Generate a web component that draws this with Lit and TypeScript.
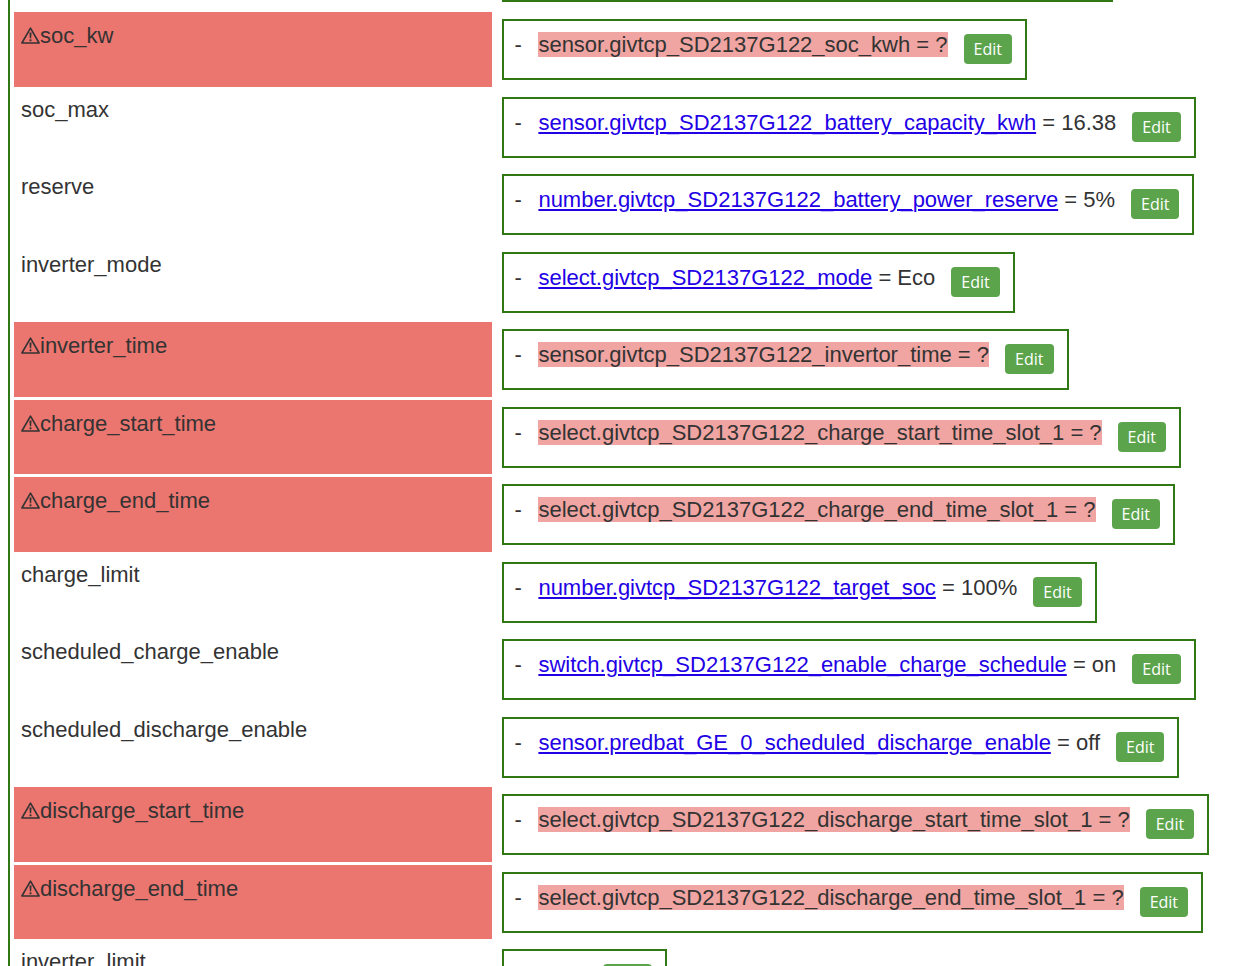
import { LitElement, html, css, svg, nothing } from "lit";
import { customElement, property } from "lit/decorators.js";

interface Setting {
  name: string;
  entity?: string;
  value: string;
  missing?: boolean;
}

const P = "givtcp_SD2137G122_";

const SETTINGS: Setting[] = [
  { name: "soc_kw", entity: `sensor.${P}soc_kwh`, value: "?", missing: true },
  { name: "soc_max", entity: `sensor.${P}battery_capacity_kwh`, value: "16.38" },
  { name: "reserve", entity: `number.${P}battery_power_reserve`, value: "5%" },
  { name: "inverter_mode", entity: `select.${P}mode`, value: "Eco" },
  { name: "inverter_time", entity: `sensor.${P}invertor_time`, value: "?", missing: true },
  { name: "charge_start_time", entity: `select.${P}charge_start_time_slot_1`, value: "?", missing: true },
  { name: "charge_end_time", entity: `select.${P}charge_end_time_slot_1`, value: "?", missing: true },
  { name: "charge_limit", entity: `number.${P}target_soc`, value: "100%" },
  { name: "scheduled_charge_enable", entity: `switch.${P}enable_charge_schedule`, value: "on" },
  { name: "scheduled_discharge_enable", entity: "sensor.predbat_GE_0_scheduled_discharge_enable", value: "off" },
  { name: "discharge_start_time", entity: `select.${P}discharge_start_time_slot_1`, value: "?", missing: true },
  { name: "discharge_end_time", entity: `select.${P}discharge_end_time_slot_1`, value: "?", missing: true },
  { name: "inverter_limit", value: "3600" },
];

const warningShape = svg`
  <path d="M9.5 1.2 L18.1 16 H0.9 Z" fill="none" stroke="currentColor" stroke-width="1.6" stroke-linejoin="round"/>
  <path d="M8.5 5.6 H10.5 L10.2 11.2 H8.8 Z" fill="currentColor"/>
  <circle cx="9.5" cy="13.3" r="1.1" fill="currentColor"/>`;

@customElement("setting-value")
class SettingValue extends LitElement {
  @property({ attribute: false }) setting!: Setting;

  static styles = css`
    :host {
      display: block;
    }
    .box {
      display: inline-flex;
      vertical-align: top;
      align-items: flex-start;
      padding: 11px 13px 14px 10px;
      border: 2px solid #307814;
      line-height: 25px;
      white-space: nowrap;
    }
    .dash {
      width: 24px;
    }
    .missing {
      background: #f0a5a2;
    }
    .link {
      color: #2200e6;
      text-decoration: underline;
    }
    .edit {
      height: 30px;
      margin: 2px 0 0 16px;
      padding: 0 10px;
      border: 0;
      border-radius: 4px;
      background: #5ca44c;
      color: #fff;
      font: 16px/30px "Open Sans", "Noto Sans", sans-serif;
      cursor: pointer;
    }
  `;

  private content() {
    const { entity, value, missing } = this.setting;
    if (!entity) return html`<span>${value}</span>`;
    if (missing) return html`<span class="missing">${entity} = ${value}</span>`;
    return html`<span><a class="link" href="#${entity}">${entity}</a> = ${value}</span>`;
  }

  render() {
    return html`<div class="box">
      <span class="dash">-</span>${this.content()}<button class="edit" type="button" aria-label="Edit ${this.setting.name}">Edit</button>
    </div>`;
  }
}

@customElement("app-root")
class AppRoot extends LitElement {
  static styles = css`
    :host {
      display: block;
      box-sizing: border-box;
      height: 100vh;
      overflow: hidden;
      padding-left: 8px;
      background: #fff;
      color: #333;
      font: 22px/25px "Liberation Sans", Arial, sans-serif;
    }
    .panel {
      --label-width: 38.8%;
      padding-left: 1px;
      border-left: 2px solid #307814;
    }
    .previous {
      display: grid;
      grid-template-columns: var(--label-width) auto;
      column-gap: 9px;
      height: 9px;
    }
    .edge {
      grid-column: 2;
      box-sizing: border-box;
      width: 611px;
      height: 2px;
      background: #307814;
    }
    .settings {
      width: 100%;
      table-layout: fixed;
      border-collapse: separate;
      border-spacing: 3px;
    }
    .label-column {
      width: var(--label-width);
    }
    .label,
    .value {
      box-sizing: border-box;
      height: 75px;
      padding: 7px 7px 0;
      vertical-align: top;
      text-align: left;
      font-weight: normal;
    }
    .row:nth-child(even) > * {
      height: 74px;
    }
    .warning {
      padding-top: 11px;
      background: #eb756f;
    }
    .name {
      display: flex;
      align-items: center;
    }
    .icon {
      width: 19px;
      height: 17px;
    }
  `;

  render() {
    return html`<main class="panel">
      <div class="previous"><div class="edge"></div></div>
      <table class="settings">
        <colgroup><col class="label-column" /><col /></colgroup>
        <tbody>
          ${SETTINGS.map(
            (s) => html`<tr class="row">
              <th scope="row" class="label ${s.missing ? "warning" : ""}">
                <span class="name">${s.missing
                  ? html`<svg class="icon" viewBox="0 0 19 17" aria-hidden="true">${warningShape}</svg>`
                  : nothing}${s.name}</span>
              </th>
              <td class="value"><setting-value .setting=${s}></setting-value></td>
            </tr>`
          )}
        </tbody>
      </table>
    </main>`;
  }
}
